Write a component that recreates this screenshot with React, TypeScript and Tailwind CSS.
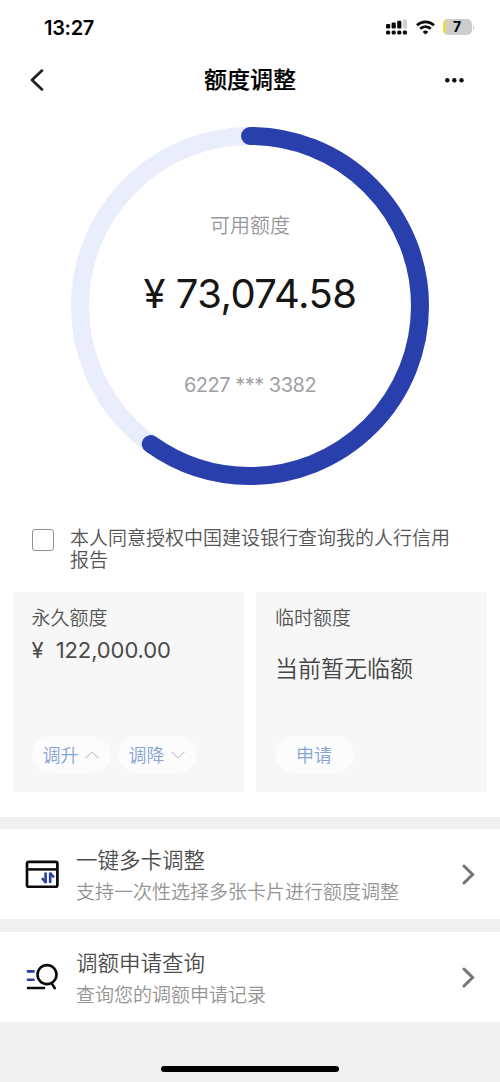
import type { ReactNode } from "react";

const CREDIT_TOTAL = 122000;
const CREDIT_AVAILABLE = 73074.58;

function StatusBar() {
  return (
    <div className="flex h-[54px] items-center justify-between pl-[44px] pr-[26px]">
      <span className="pt-px text-[20px] leading-6 font-semibold text-black tracking-[-0.3px]">13:27</span>
      <div className="flex items-center">
        {/* Dual SIM signal */}
        <svg width="22" height="16" viewBox="0 0 22 16" fill="#0a0a0a">
          <rect x="0" y="5" width="4.2" height="4.4" rx="1.2" />
          <rect x="5.6" y="3.6" width="4.2" height="5.8" rx="1.2" />
          <rect x="11.2" y="1.7" width="4.2" height="7.7" rx="1.2" />
          <rect x="16.8" y="0.5" width="4.2" height="8.9" rx="1.2" fill="#cfcfcf" />
          <rect x="0" y="11.4" width="4.2" height="4.2" rx="1.6" />
          <rect x="5.6" y="11.4" width="4.2" height="4.2" rx="1.6" />
          <rect x="11.2" y="11.4" width="4.2" height="4.2" rx="1.6" />
          <rect x="16.8" y="11.4" width="4.2" height="4.2" rx="1.6" />
        </svg>
        <svg className="ml-[8px]" width="19" height="15" viewBox="0 0 19 15" fill="none" stroke="#0a0a0a" strokeWidth="2.7">
          <path d="M1 5.3a12.2 12.2 0 0 1 17 0" />
          <path d="M4.2 8.7a7.6 7.6 0 0 1 10.6 0" />
          <path d="M9.5 14.6 6.7 11.9a4.1 4.1 0 0 1 5.6 0Z" fill="#0a0a0a" stroke="none" />
        </svg>
        <div className="ml-[8px] flex h-4 w-[29px] items-stretch overflow-hidden rounded-[5px] bg-[#cdcdcd]">
          <span className="w-[3px] bg-[#ecdb4c]" />
          <span className="flex-1 pr-[3px] text-center text-[14px] leading-4 font-bold text-black">7</span>
        </div>
        <span className="ml-px h-[5px] w-[1.5px] rounded-r bg-[#cdcdcd]" />
      </div>
    </div>
  );
}

function NavBar() {
  return (
    <div className="grid h-[52px] grid-cols-[1fr_auto_1fr] items-center pl-[30px] pr-[30px]">
      <svg width="14" height="22" viewBox="0 0 14 22" fill="none" stroke="#1f1f1f" strokeWidth="2.7" strokeLinecap="round" strokeLinejoin="round">
        <path d="M12 1.6 2 11l10 9.4" />
      </svg>
      <h1 className="text-[23px] leading-8 font-medium text-black [-webkit-text-stroke:0.2px_black]">额度调整</h1>
      <svg className="mr-[6px] justify-self-end" width="19" height="5" viewBox="0 0 19 5" fill="#0a0a0a">
        <circle cx="2.3" cy="2.2" r="2.2" />
        <circle cx="9.3" cy="2.2" r="2.2" />
        <circle cx="16.5" cy="2.2" r="2.2" />
      </svg>
    </div>
  );
}

function CreditRing() {
  const r = 170;
  const length = 2 * Math.PI * r;
  const used = (length * CREDIT_AVAILABLE) / CREDIT_TOTAL;

  return (
    <div className="mx-auto mt-5 grid size-[360px] place-items-center">
      <svg className="col-start-1 row-start-1 -rotate-90" width="360" height="360" viewBox="0 0 360 360" fill="none" strokeWidth="18">
        <circle cx="180" cy="180" r={r} stroke="#eaedfc" />
        <circle cx="180" cy="180" r={r} stroke="#283fac" strokeLinecap="round" strokeDasharray={`${used} ${length}`} />
      </svg>
      <div className="col-start-1 row-start-1 flex flex-col items-center pb-0.5">
        <span className="text-[20px] leading-7 font-[350] text-[#97979d]">可用额度</span>
        <span className="mt-[29px] text-[40px] leading-[50px] tracking-[-0.55px] text-[#161616] whitespace-pre">¥ 73,074.58</span>
        <span className="mt-[52px] text-[20px] leading-7 tracking-[-0.5px] text-[#a0a0a5]">6227 *** 3382</span>
      </div>
    </div>
  );
}

function Pill({ children }: { children: ReactNode }) {
  return (
    <button className="flex h-[37px] w-[79px] items-center justify-center gap-1.5 rounded-full bg-[#fcfcfc] pt-px pr-px text-[18px] font-[350] text-[#86a3d6]">
      {children}
    </button>
  );
}

function LimitCards() {
  return (
    <div className="grid grid-cols-2 gap-3 px-[13px]">
      <div className="flex h-[200px] flex-col bg-[#f7f7f7] pt-[13px] pb-[19px] pl-[18.5px]">
        <span className="text-[19px] leading-7 font-[350] text-[#555]">永久额度</span>
        <span className="mt-[3px] text-[22px] leading-7 tracking-[-0.1px] text-[#4a4a4a] whitespace-pre">¥  122,000.00</span>
        <div className="mt-auto flex gap-[7px]">
          <Pill>
            调升
            <svg width="14" height="8" viewBox="0 0 14 8" fill="none" stroke="#c9ced6" strokeWidth="1.2">
              <path d="M0.5 7.3 7 1l6.5 6.3" />
            </svg>
          </Pill>
          <Pill>
            调降
            <svg width="14" height="8" viewBox="0 0 14 8" fill="none" stroke="#c9ced6" strokeWidth="1.2">
              <path d="M0.5 0.7 7 7l6.5-6.3" />
            </svg>
          </Pill>
        </div>
      </div>
      <div className="flex h-[200px] flex-col bg-[#f7f7f7] pt-[13px] pb-[19px] pl-[19px]">
        <span className="text-[19px] leading-7 font-[350] text-[#555]">临时额度</span>
        <span className="mt-5 text-[23px] leading-8 font-[350] text-[#444]">当前暂无临额</span>
        <div className="mt-auto flex">
          <Pill>申请</Pill>
        </div>
      </div>
    </div>
  );
}

function MultiCardIcon() {
  return (
    <svg width="34" height="28" viewBox="0 0 34 28" fill="none">
      <rect x="2" y="1.8" width="30.4" height="25" rx="1.6" stroke="#0a0a0a" strokeWidth="2.7" />
      <path d="M2 9.4h30" stroke="#0a0a0a" strokeWidth="2.5" />
      <path d="M20.6 12.4v10.8M25.2 23V12.4" stroke="#2a3fa6" strokeWidth="2.6" />
      <path d="M21 22.6l-4-4.4M25 13.2l4 4.2" stroke="#2a3fa6" strokeWidth="2.6" />
    </svg>
  );
}

function QueryIcon() {
  return (
    <svg width="34" height="28" viewBox="0 0 34 28" fill="none" strokeWidth="2.6" strokeLinecap="round">
      <path d="M1.8 8.4h7.8M1.8 16.7h7.8" stroke="#2a3fa6" strokeLinecap="butt" />
      <circle cx="22" cy="11.6" r="9.5" stroke="#0a0a0a" />
      <path d="M26.8 20.6l3 4.6M3 25h16" stroke="#0a0a0a" />
    </svg>
  );
}

function MenuRow({ icon, title, desc }: { icon: ReactNode; title: string; desc: string }) {
  return (
    <div className="flex h-[90px] items-center bg-white pl-[25px] pr-[25px]">
      {icon}
      <div className="ml-[17px] flex flex-1 flex-col gap-[5px] pt-[5px]">
        <span className="text-[21.5px] leading-7 font-[350] text-[#4c4c4c]">{title}</span>
        <span className="text-[19px] leading-7 font-[350] text-[#949494]">{desc}</span>
      </div>
      <svg width="13" height="21" viewBox="0 0 13 21" fill="none" stroke="#757575" strokeWidth="3" strokeLinecap="round">
        <path d="M2 2l8.6 8.5L2 19" />
      </svg>
    </div>
  );
}

export default function App() {
  return (
    <main className="flex h-[1082px] w-[500px] flex-col bg-[#f0f0f0] font-['Inter','Noto_Sans_CJK_SC',sans-serif]">
      <div className="h-[817px] bg-white">
        <StatusBar />
        <NavBar />
        <CreditRing />

        <label className="flex h-[106px] items-start pt-[42px] pl-8">
          <span className="mt-[1px] size-[22px] shrink-0 rounded-[3px] border border-[#929292] bg-white" />
          <span className="ml-[16px] w-[385px] text-[19px] leading-[22px] font-[350] text-[#555]">
            本人同意授权中国建设银行查询我的人行信用报告
          </span>
        </label>

        <LimitCards />
      </div>

      <div className="mt-3 flex flex-col gap-[13px]">
        <MenuRow icon={<MultiCardIcon />} title="一键多卡调整" desc="支持一次性选择多张卡片进行额度调整" />
        <MenuRow icon={<QueryIcon />} title="调额申请查询" desc="查询您的调额申请记录" />
      </div>

      {/* Home indicator */}
      <div className="mx-auto mt-auto mb-[10px] h-[6px] w-[178px] rounded-full bg-black" />
    </main>
  );
}
